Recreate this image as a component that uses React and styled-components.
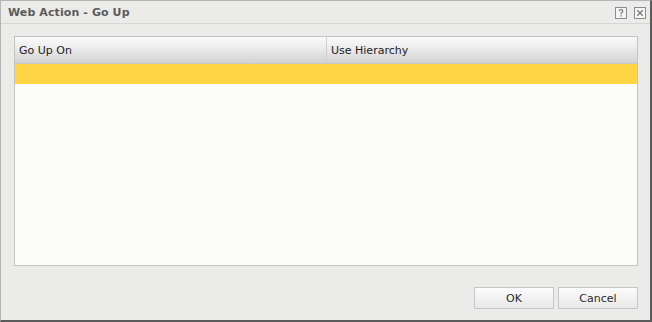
import React from 'react'
import styled, {createGlobalStyle} from 'styled-components'

const GlobalStyle = createGlobalStyle `
  html, body {
    margin: 0;
    padding: 0;
    background: #ffffff;
  }
  body {
    font-family: Tahoma, "DejaVu Sans", sans-serif;
    font-size: 11px;
  }
`

const Dialog = styled.div `
  width: 652px;
  height: 322px;
  box-sizing: border-box;
  background: #ebecea;
  border: 1px solid #b4b4b4;
  border-right: 2px solid #5a5a5a;
  border-bottom: 2px solid #5a5a5a;
  display: flex;
  flex-direction: column;
`

const TitleBar = styled.div `
  height: 22px;
  display: flex;
  align-items: center;
  justify-content: space-between;
  padding: 0 4px 0 7px;
  border-bottom: 1px solid #d6d6d4;
`

const Title = styled.div `
  font-weight: bold;
  font-size: 11px;
  color: #5b5b5b;
  letter-spacing: 0.1px;
`

const Tools = styled.div `
  display: flex;
  gap: 7px;
  padding-top: 1px;
`

const ToolIcon = styled.svg `
  width: 12px;
  height: 12px;
  display: block;
`

const Body = styled.div `
  padding: 12px 12px 0 13px;
  display: flex;
  flex-direction: column;
`

const Grid = styled.div `
  height: 230px;
  box-sizing: border-box;
  border: 1px solid #c4c4c2;
  background: #fcfdfb;
  display: flex;
  flex-direction: column;
`

const HeaderRow = styled.div `
  height: 26px;
  display: flex;
  background: linear-gradient(to bottom, #fafafa 0%, #ededed 40%, #d2d2d2 100%);
  border-bottom: 1px solid #c8c8c8;
`

const HeaderCell = styled.div `
  width: ${p => p.w ? p.w + 'px' : 'auto'};
  flex: ${p => p.w ? 'none' : 1};
  box-sizing: border-box;
  display: flex;
  align-items: center;
  padding-left: 4px;
  padding-top: 1px;
  color: #222;
  border-right: ${p => p.divider ? '1px solid #cfcfcf' : 'none'};
`

const SelectedRow = styled.div `
  height: 20px;
  background: #ffd545;
`

const Footer = styled.div `
  display: flex;
  justify-content: flex-end;
  gap: 4px;
  padding: 21px 12px 0 0;
`

const Button = styled.button `
  width: 80px;
  height: 22px;
  box-sizing: border-box;
  border: 1px solid #c6c6c6;
  background: linear-gradient(to bottom, #fbfbfb 0%, #f2f2f2 50%, #e8e8e8 100%);
  font-family: Tahoma, "DejaVu Sans", sans-serif;
  font-size: 11px;
  color: #2a2a2a;
  padding: 0;
`

const HelpIcon = () => (
  <ToolIcon viewBox="0 0 12 12">
    <rect x="0.5" y="0.5" width="11" height="11" fill="#f4f4f4" stroke="#8c8c8c"/>
    <path d="M4.2 4.3 Q4.3 2.6 6 2.6 Q7.8 2.6 7.8 4.2 Q7.8 5.2 6.6 5.8 Q6 6.1 6 7.2" fill="none" stroke="#7a7a7a" strokeWidth="1.2"/>
    <rect x="5.4" y="8.2" width="1.3" height="1.3" fill="#7a7a7a"/>
  </ToolIcon>
)

const CloseIcon = () => (
  <ToolIcon viewBox="0 0 12 12">
    <rect x="0.5" y="0.5" width="11" height="11" fill="#f4f4f4" stroke="#8c8c8c"/>
    <path d="M3.3 3.3 L8.7 8.7 M8.7 3.3 L3.3 8.7" stroke="#7a7a7a" strokeWidth="1.3"/>
  </ToolIcon>
)

const App = () => (<>
  <GlobalStyle/>
  <Dialog>
    <TitleBar>
      <Title>Web Action - Go Up</Title>
      <Tools>
        <HelpIcon/>
        <CloseIcon/>
      </Tools>
    </TitleBar>
    <Body>
      <Grid>
        <HeaderRow>
          <HeaderCell w={312} divider>Go Up On</HeaderCell>
          <HeaderCell>Use Hierarchy</HeaderCell>
        </HeaderRow>
        <SelectedRow/>
      </Grid>
    </Body>
    <Footer>
      <Button>OK</Button>
      <Button>Cancel</Button>
    </Footer>
  </Dialog>
</>)

export default App
